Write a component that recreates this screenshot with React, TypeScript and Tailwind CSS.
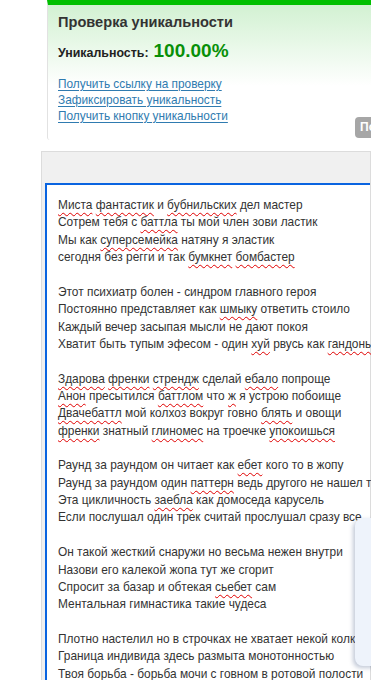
import React from "react";

const W = ({ children }: { children: React.ReactNode }) => (
  <span className="underline decoration-wavy decoration-[#e00000] decoration-1 underline-offset-[3px]">{children}</span>
);

type Seg = string | { w: string };
const lines: Seg[][] = [
  [{ w: "Миста" }, " ", { w: "фантастик" }, " и ", { w: "бубнильских" }, " дел мастер"],
  ["Сотрем тебя с ", { w: "баттла" }, " ты мой член зови ластик"],
  ["Мы как ", { w: "суперсемейка" }, " натяну я эластик"],
  ["сегодня без регги и так ", { w: "бумкнет" }, " ", { w: "бомбастер" }],
  [],
  ["Этот психиатр болен - синдром главного героя"],
  ["Постоянно представляет как ", { w: "шмыку" }, " ответить стоило"],
  ["Каждый вечер засыпая мысли не дают покоя"],
  ["Хватит быть тупым эфесом - один ", { w: "хуй" }, " рвусь как ", { w: "гандоны" }],
  [],
  [{ w: "Здарова" }, " ", { w: "френки" }, " ", { w: "стрендж" }, " сделай ", { w: "ебало" }, " попроще"],
  [{ w: "Анон" }, " пресытился ", { w: "баттлом" }, " что ", { w: "ж" }, " я устрою побоище"],
  [{ w: "Двачебаттл" }, " мой колхоз вокруг говно ", { w: "блять" }, " и овощи"],
  [{ w: "френки" }, " знатный ", { w: "глиномес" }, " на троечке ", { w: "упокоишься" }],
  [],
  ["Раунд за раундом он читает как ", { w: "ебет" }, " кого то в жопу"],
  ["Раунд за раундом один ", { w: "паттерн" }, " ведь другого не нашел т"],
  ["Эта цикличность ", { w: "заебла" }, " как домоседа карусель"],
  ["Если послушал один трек считай прослушал сразу все"],
  [],
  ["Он такой жесткий снаружи но весьма нежен внутри"],
  ["Назови его калекой жопа тут же сгорит"],
  ["Спросит за базар и обтекая ", { w: "сьебет" }, " сам"],
  ["Ментальная гимнастика такие чудеса"],
  [],
  ["Плотно настелил но в строчках не хватает некой колко"],
  ["Граница индивида здесь размыта монотонностью"],
  ["Твоя борьба - борьба мочи с говном в ротовой полости"],
];

export default function App() {
  return (
    <div
      className="relative w-[371px] h-[680px] overflow-hidden bg-white"
      style={{ fontFamily: '"Liberation Sans", Arial, sans-serif' }}
    >
      {/* Top card */}
      <div className="ml-[47px] h-[140px] border-t-[5px] border-[#00c000] border-l border-l-[#e2e2e2] rounded-bl-[3px] bg-gradient-to-b from-[#d2f1d2] to-white to-[60%] pl-[10px] pt-[8px]">
        <div className="text-[14.6px] font-bold text-[#333] leading-[18px] whitespace-nowrap">
          Проверка уникальности
        </div>
        <div className="mt-[6px] flex items-baseline whitespace-nowrap">
          <span className="text-[12.4px] font-bold text-[#222]">Уникальность:</span>
          <span className="ml-[5px] text-[19px] font-bold text-[#089008]">100.00%</span>
        </div>
        <div className="mt-[10px] flex flex-col text-[11.85px] leading-[16px] text-[#2f7bb0] whitespace-nowrap">
          <span className="underline underline-offset-[2px]">Получить ссылку на проверку</span>
          <span className="underline underline-offset-[2px]">Зафиксировать уникальность</span>
          <span className="underline underline-offset-[2px]">Получить кнопку уникальности</span>
        </div>
      </div>

      {/* grey button peeking */}
      <div className="absolute left-[355px] top-[117px] w-[40px] h-[21px] rounded-[4px] bg-[#a6a6a6] text-white text-[12px] font-bold leading-[21px] pl-[5px]">
        По
      </div>

      {/* Editor panel */}
      <div className="mt-[11px] ml-[41px] h-[600px] border border-[#dcdcdc] bg-[#f0f0f0] pt-[31px] pl-[3px]">
        <div className="h-full border-l-2 border-t-2 border-[#0a64e0] bg-white pl-[11px] pt-[12px] text-[11.9px] leading-[17.37px] text-[#333] whitespace-nowrap">
          {lines.map((l, i) => (
            <div key={i} className="h-[17.37px]">
              {l.map((s, j) => (typeof s === "string" ? <React.Fragment key={j}>{s}</React.Fragment> : <W key={j}>{s.w}</W>))}
            </div>
          ))}
        </div>
      </div>

      {/* right floating panel */}
      <div className="absolute left-[355px] top-[518px] w-[40px] h-[148px] rounded-[8px] bg-[#eef3fb] shadow-[-2px_2px_4px_rgba(80,100,140,0.35)]" />
    </div>
  );
}
